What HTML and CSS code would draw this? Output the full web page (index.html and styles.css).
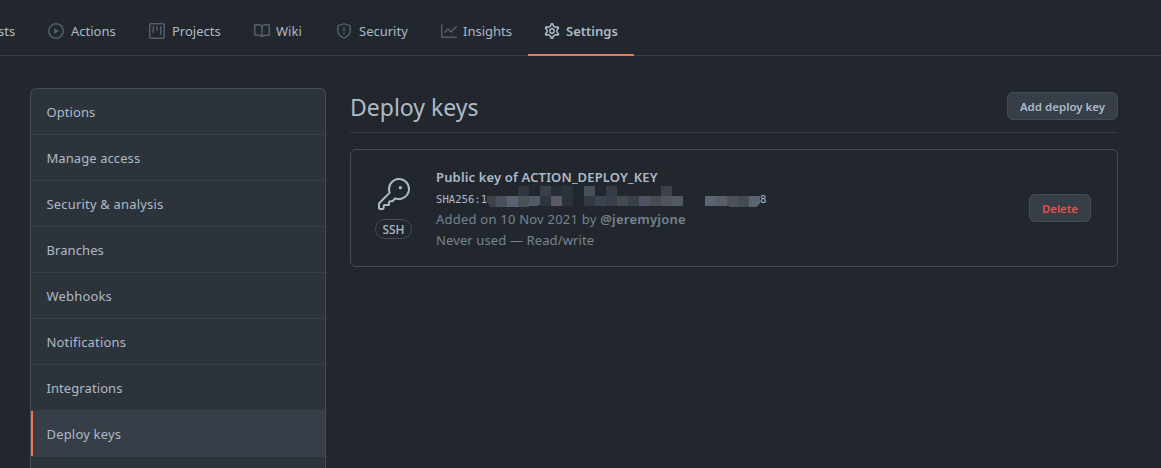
FILE: index.html
```html
<!DOCTYPE html>
<html lang="en">
<head>
<meta charset="utf-8">
<title>Deploy keys</title>
<link rel="stylesheet" href="styles.css">
</head>
<body>
<nav class="tabs">
  <a class="tab tab-requests"><span class="label">sts</span></a>
  <a class="tab tab-actions"><svg class="icon" viewBox="0 0 16 16"><path fill-rule="evenodd" d="M1.5 8a6.5 6.5 0 1113 0 6.5 6.5 0 01-13 0zM8 0a8 8 0 100 16A8 8 0 008 0zM6.379 5.227A.25.25 0 006 5.442v5.117a.25.25 0 00.379.214l4.264-2.559a.25.25 0 000-.428L6.379 5.227z"/></svg><span class="label">Actions</span></a>
  <a class="tab tab-projects"><svg class="icon" viewBox="0 0 16 16"><path fill-rule="evenodd" d="M1.75 0A1.75 1.75 0 000 1.75v12.5C0 15.216.784 16 1.75 16h12.5A1.75 1.75 0 0016 14.25V1.75A1.75 1.75 0 0014.25 0H1.75zM1.5 1.75a.25.25 0 01.25-.25h12.5a.25.25 0 01.25.25v12.5a.25.25 0 01-.25.25H1.75a.25.25 0 01-.25-.25V1.75zM11.75 3a.75.75 0 00-.75.75v7.5a.75.75 0 001.5 0v-7.5a.75.75 0 00-.75-.75zm-8.25.75a.75.75 0 011.5 0v5.5a.75.75 0 01-1.5 0v-5.5zM8 3a.75.75 0 00-.75.75v3.5a.75.75 0 001.5 0v-3.5A.75.75 0 008 3z"/></svg><span class="label">Projects</span></a>
  <a class="tab tab-wiki"><svg class="icon" viewBox="0 0 16 16"><path fill-rule="evenodd" d="M0 1.75A.75.75 0 01.75 1h4.253c1.227 0 2.317.59 3 1.501A3.744 3.744 0 0111.006 1h4.245a.75.75 0 01.75.75v10.5a.75.75 0 01-.75.75h-4.507a2.25 2.25 0 00-1.591.659l-.622.621a.75.75 0 01-1.06 0l-.622-.621A2.25 2.25 0 005.258 13H.75a.75.75 0 01-.75-.75V1.75zm8.755 3a2.25 2.25 0 012.25-2.25H14.5v9h-3.757c-.71 0-1.4.201-1.992.572l.004-7.322zm-1.504 7.324l.004-5.073-.002-2.253A2.25 2.25 0 005.003 2.5H1.5v9h3.757a3.75 3.75 0 011.994.574z"/></svg><span class="label">Wiki</span></a>
  <a class="tab tab-security"><svg class="icon" viewBox="0 0 16 16"><path fill-rule="evenodd" d="M7.467.133a1.75 1.75 0 011.066 0l5.25 1.68A1.75 1.75 0 0115 3.48V7c0 1.566-.32 3.182-1.303 4.682-.983 1.498-2.585 2.813-5.032 3.855a1.7 1.7 0 01-1.33 0c-2.447-1.042-4.049-2.357-5.032-3.855C1.32 10.182 1 8.566 1 7V3.48a1.75 1.75 0 011.217-1.667l5.25-1.68zm.61 1.429a.25.25 0 00-.153 0l-5.25 1.68a.25.25 0 00-.174.238V7c0 1.358.275 2.666 1.057 3.86.784 1.194 2.121 2.34 4.366 3.297a.2.2 0 00.154 0c2.245-.956 3.582-2.104 4.366-3.298C13.225 9.666 13.5 8.36 13.5 7V3.48a.25.25 0 00-.174-.237l-5.25-1.68zM9 10.5a1 1 0 11-2 0 1 1 0 012 0zm-.25-5.75a.75.75 0 10-1.5 0v3a.75.75 0 001.5 0v-3z"/></svg><span class="label">Security</span></a>
  <a class="tab tab-insights"><svg class="icon" viewBox="0 0 16 16"><path fill-rule="evenodd" d="M1.5 1.75a.75.75 0 00-1.5 0v12.5c0 .414.336.75.75.75h14.5a.75.75 0 000-1.5H1.5V1.75zm14.28 2.53a.75.75 0 00-1.06-1.06L10 7.94 7.53 5.47a.75.75 0 00-1.06 0L3.22 8.72a.75.75 0 001.06 1.06L7 7.06l2.47 2.47a.75.75 0 001.06 0l5.25-5.25z"/></svg><span class="label">Insights</span></a>
  <a class="tab tab-settings selected"><svg class="icon gear" viewBox="0 0 16 16"><path transform="translate(8 8) scale(1.11) translate(-8 -8)" d="M7.429 1.525a6.593 6.593 0 011.142 0c.036.003.108.036.137.146l.289 1.105c.147.56.55.967.997 1.189.174.086.341.183.501.29.417.278.97.423 1.53.27l1.102-.303c.11-.03.175.016.195.046.219.31.41.641.573.989.014.031.022.11-.059.19l-.815.806c-.411.406-.562.957-.53 1.456a4.588 4.588 0 010 .582c-.032.499.119 1.05.53 1.456l.815.806c.08.08.073.159.059.19a6.494 6.494 0 01-.573.99c-.02.029-.086.074-.195.045l-1.103-.303c-.559-.153-1.112-.008-1.529.27-.16.107-.327.204-.5.29-.449.222-.851.628-.998 1.189l-.289 1.105c-.029.11-.101.143-.137.146a6.613 6.613 0 01-1.142 0c-.036-.003-.108-.037-.137-.146l-.289-1.105c-.147-.56-.55-.967-.997-1.189a4.502 4.502 0 01-.501-.29c-.417-.278-.97-.423-1.53-.27l-1.102.303c-.11.03-.175-.016-.195-.046a6.492 6.492 0 01-.573-.989c-.014-.031-.022-.11.059-.19l.815-.806c.411-.406.562-.957.53-1.456a4.587 4.587 0 010-.582c.032-.499-.119-1.05-.53-1.456l-.815-.806c-.08-.08-.073-.159-.059-.19a6.44 6.44 0 01.573-.99c.02-.029.086-.075.195-.045l1.103.303c.559.153 1.112.008 1.529-.27.16-.107.327-.204.5-.29.449-.222.851-.628.998-1.189l.289-1.105c.029-.11.101-.143.137-.146z"/><circle cx="8" cy="8" r="2.25"/></svg><span class="label">Settings</span></a>
</nav>
<div class="page">
  <aside class="menu">
    <a class="menu-item">Options</a>
    <a class="menu-item">Manage access</a>
    <a class="menu-item wide">Security &amp; analysis</a>
    <a class="menu-item">Branches</a>
    <a class="menu-item wide">Webhooks</a>
    <a class="menu-item wide">Notifications</a>
    <a class="menu-item">Integrations</a>
    <a class="menu-item wide current">Deploy keys</a>
  </aside>
  <main class="content">
    <header class="subhead">
      <h1>Deploy keys</h1>
      <button class="btn btn-add">Add deploy key</button>
    </header>
    <section class="key-card">
      <div class="key-type">
        <svg class="key-icon" viewBox="0 0 24 24"><path d="M16.75 8.5a1.25 1.25 0 100-2.5 1.25 1.25 0 000 2.5z"/><path fill-rule="evenodd" d="M15.75 0a8.25 8.25 0 00-7.851 10.79L.513 18.178A1.75 1.75 0 000 19.414v2.836C0 23.217.784 24 1.75 24h1.5A1.75 1.75 0 005 22.25v-1a.25.25 0 01.25-.25h2.735a.75.75 0 00.545-.22l.214-.213A.875.875 0 009 19.948V18.5a.25.25 0 01.25-.25h1.086c.464 0 .91-.184 1.237-.513l1.636-1.636A8.25 8.25 0 1015.75 0zM9 8.25a6.75 6.75 0 114.288 6.287.75.75 0 00-.804.168l-1.97 1.97a.25.25 0 01-.178.075H9.25A1.75 1.75 0 007.5 18.5v1H5.25a1.75 1.75 0 00-1.75 1.75v1a.25.25 0 01-.25.25h-1.5a.25.25 0 01-.25-.25v-2.836a.25.25 0 01.073-.177l7.722-7.721a.75.75 0 00.168-.804A6.73 6.73 0 019 8.25z"/></svg>
        <span class="ssh">SSH</span>
      </div>
      <div class="key-info">
        <strong class="key-title">Public key of ACTION_DEPLOY_KEY</strong>
        <div class="fingerprint"><code class="hash-start">SHA256:1</code><svg class="mosaic" viewBox="487 186 273 22" shape-rendering="crispEdges">
          <path fill="#3d434d" d="M487 196h9v11h-6l-3-6z"/><path fill="#4a505d" d="M496 196h11v11h-11z"/><path fill="#5b6073" d="M507 196h11v11h-11z"/><path fill="#4a5157" d="M518 196h11v11h-11z"/><path fill="#535966" d="M529 196h11v9l-5 1h-6z"/>
          <path fill="#30363f" d="M518 186h11v10h-11z"/><path fill="#3a404a" d="M540 186h11v10h-11z"/><path fill="#282e37" d="M551 186h11v10h-11z"/><path fill="#2d333b" d="M562 186h11v20h-11z"/>
          <path fill="#2d3540" d="M540 196h11v10h-11z"/><path fill="#3d444e" d="M540 196h0v10h0z"/><path fill="#5b5964" d="M551 196h11v10h-11z"/>
          <path fill="#474f58" d="M584 186h11v10h-11z"/><path fill="#363b48" d="M606 186h11v10h-11z"/><path fill="#3d4049" d="M661 186h11v10h-11z"/>
          <path fill="#323844" d="M584 196h11v10h-11z"/><path fill="#3e444f" d="M595 196h11v10h-11z"/><path fill="#373e4a" d="M606 196h11v10h-11z"/><path fill="#454950" d="M617 196h11v10h-11z"/><path fill="#3a404a" d="M628 196h11v10h-11z"/><path fill="#505264" d="M639 196h11v10h-11z"/><path fill="#474b54" d="M650 196h11v10h-11z"/><path fill="#50535e" d="M661 196h11v10h-11z"/><path fill="#535865" d="M672 196h11v10h-11z"/>
          <path fill="#5a6572" d="M705 196h11v10h-11z"/><path fill="#585d69" d="M716 196h11v10h-11z"/><path fill="#4e5058" d="M727 196h11v11h-8l-3-1z"/><path fill="#454b54" d="M738 196h11v11h-11z"/><path fill="#5b6373" d="M749 196h11v7l-4 4h-7z"/>
        </svg><code>8</code></div>
        <div class="muted added">Added on 10 Nov 2021 by <b>@jeremyjone</b></div>
        <div class="muted used">Never used — Read/write</div>
      </div>
      <button class="btn btn-delete">Delete</button>
    </section>
  </main>
</div>
</body>
</html>
```
FILE: styles.css
```css
* { box-sizing: border-box; }
body { margin: 0; height: 468px; overflow: hidden; background: #22272e; color: #adbac7; font: 13px/20px "Noto Sans", "Open Sans", sans-serif; }
.tabs { display: flex; height: 56px; border-bottom: 1px solid #373e47; }
.tab { display: flex; align-items: center; gap: 7px; height: 56px; padding: 6px 0 0 16px; flex: none; white-space: nowrap; }
.label { margin-top: -1px; }
.icon { width: 16px; height: 16px; fill: #545d68; flex: none; }
.tab-requests { width: 32px; padding-left: 0; }
.tab-requests .label { margin-left: -2px; }
.tab-actions { width: 101px; }
.tab-projects { width: 105px; }
.tab-wiki { width: 82px; gap: 6px; }
.tab-security { width: 105px; }
.tab-insights { width: 103px; gap: 6px; }
.tab-settings { width: 106px; gap: 6px; }
.selected { border-bottom: 2px solid #ec775c; font-weight: 600; padding-top: 8px; }
.gear { fill: none; stroke: #adbac7; stroke-width: 1.4; stroke-linejoin: round; }
.page { display: flex; gap: 24px; height: 412px; padding: 32px 43px 0 30px; }
.menu { width: 296px; height: 380px; flex: none; border: 1px solid #444c56; border-bottom: 0; border-radius: 6px 6px 0 0; background: #2d333b; overflow: hidden; }
.menu-item { display: flex; align-items: center; height: 46px; padding-left: 15.5px; border-bottom: 1px solid #373e47; letter-spacing: 0.08px; }
.wide { letter-spacing: 0.18px; }
.current { background: #373e47; box-shadow: inset 2px 0 #ec775c; }
.content { flex: 1; }
.subhead { display: flex; justify-content: space-between; height: 45px; padding-top: 4px; border-bottom: 1px solid #373e47; }
h1 { margin: -1px 0 0; font-size: 23px; line-height: 32px; font-weight: 400; }
.btn { height: 28px; border: 1px solid #444c56; border-radius: 6px; background: #373e47; color: #adbac7; font: 600 11.5px/18px "Noto Sans", sans-serif; padding: 2px 0 0; white-space: nowrap; }
.btn-add { width: 111px; }
.btn-delete { width: 62px; color: #e5534b; margin: 44px 26px 0 auto; font-size: 11.3px; }
.key-card { display: flex; height: 118px; margin-top: 16px; border: 1px solid #444c56; border-radius: 6px; }
.key-type { display: flex; flex-direction: column; align-items: center; width: 85px; padding-top: 28px; }
.key-icon { width: 32px; height: 32px; fill: #adbac7; }
.ssh { width: 37px; height: 20px; margin-top: 9px; border: 1px solid #444c56; border-radius: 10px; font-size: 12px; font-weight: 500; line-height: 19px; text-align: center; }
.key-info { padding-top: 17px; white-space: nowrap; }
.key-title { display: block; font-weight: 600; line-height: 20px; letter-spacing: 0.15px; }
.fingerprint { display: flex; height: 22px; margin-top: -1px; margin-bottom: 1px; }
code { font: 10.6px/26px "DejaVu Sans Mono", monospace; }
.hash-start { width: 51px; }
.mosaic { width: 273px; height: 22px; flex: none; }
.muted { color: #768390; line-height: 21px; }
.added { letter-spacing: 0.22px; }
.used { letter-spacing: 0.12px; }
.muted b { font-weight: 600; }
```
